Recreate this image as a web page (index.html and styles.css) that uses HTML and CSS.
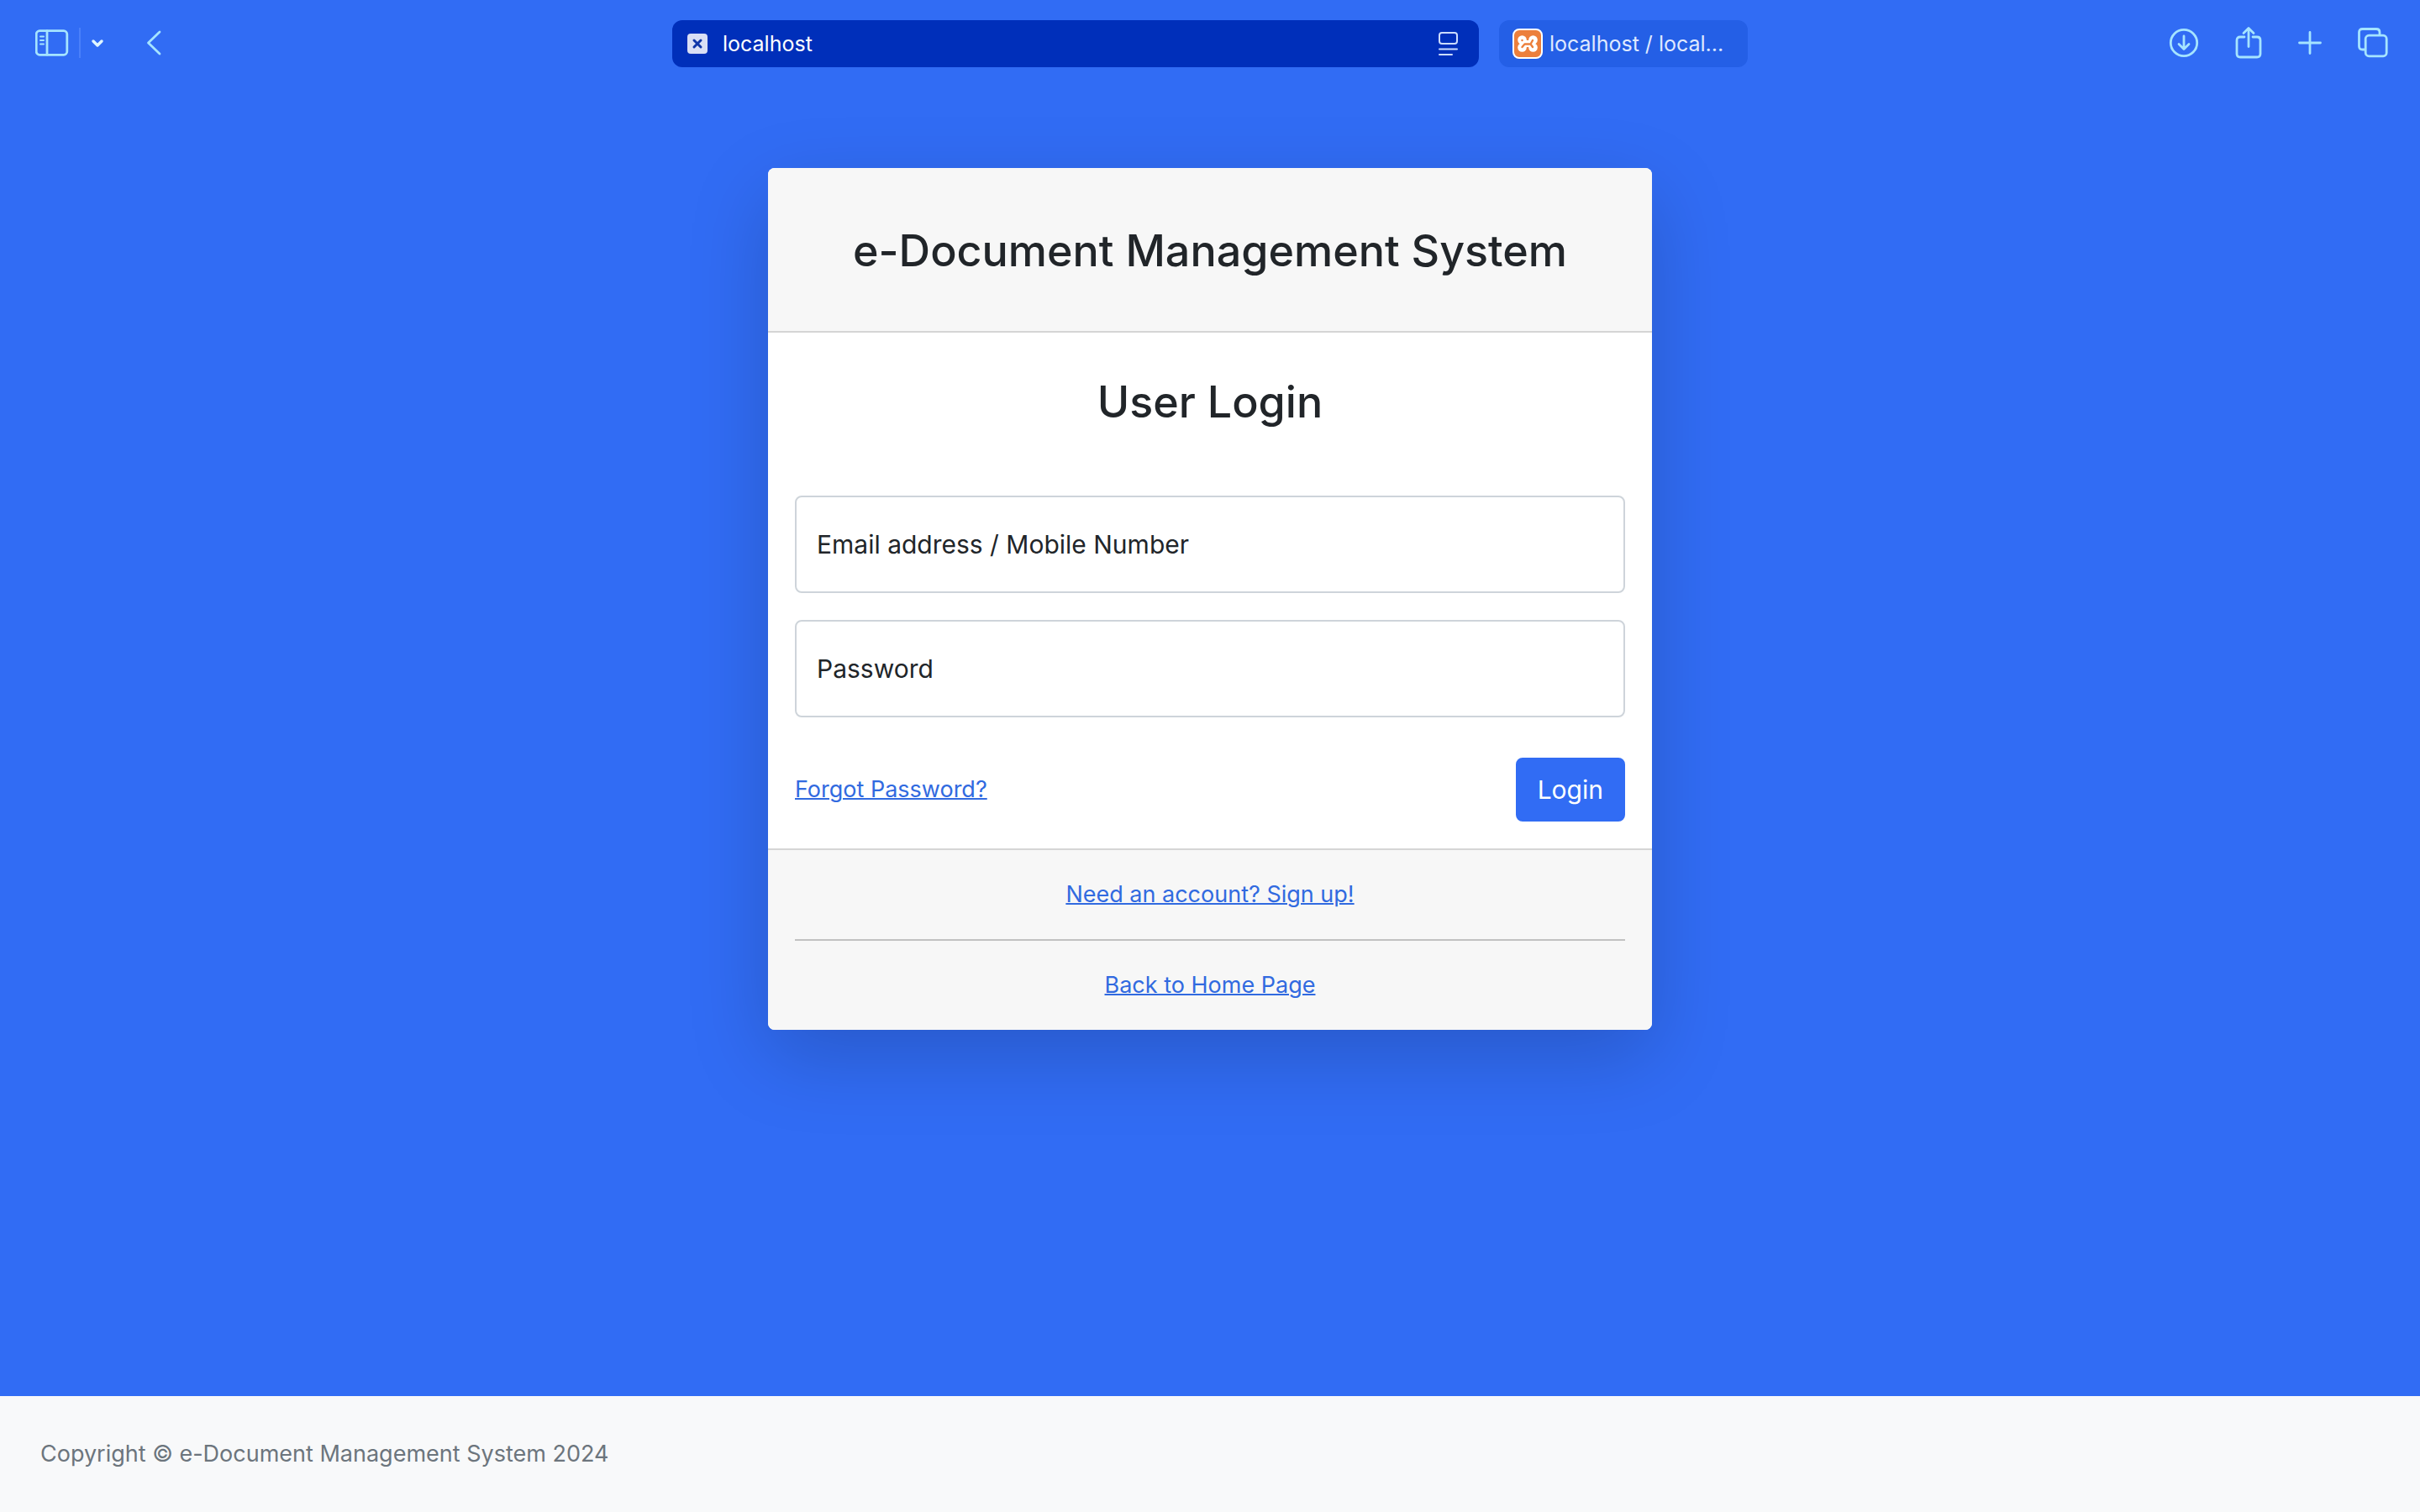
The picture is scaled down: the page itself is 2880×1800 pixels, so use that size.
FILE: index.html
```html
<!DOCTYPE html>
<html lang="en">
<head>
<meta charset="utf-8">
<meta name="viewport" content="width=device-width, initial-scale=1">
<title>e-Document Management System</title>
<link rel="stylesheet" href="styles.css">
</head>
<body>
<header class="toolbar">
  <div class="tools">
    <button class="tool tool-sidebar" type="button" aria-label="Sidebar">
      <svg width="40" height="32" viewBox="0 0 40 32"><rect x="1.2" y="1.7" width="36.600" height="28.600" rx="4"/><path d="M14 2v28"/><path class="fine" d="M6 8.5h4M6 13h4M6 17.500h4"/></svg>
    </button>
    <span class="divider"></span>
    <button class="tool tool-menu" type="button" aria-label="Tab groups">
      <svg class="bold" width="16" height="12" viewBox="0 0 16 12"><path d="M3 4l5 5 5-5"/></svg>
    </button>
    <button class="tool" type="button" aria-label="Back">
      <svg width="20" height="32" viewBox="0 0 20 32"><path d="M18 3L4.500 16 18 29"/></svg>
    </button>
  </div>
  <nav class="tabs" aria-label="Tabs">
    <div class="tab tab-active">
      <button class="tab-close" type="button" aria-label="Close tab">
        <svg width="24" height="24" viewBox="0 0 24 24"><rect width="24" height="24" rx="4"/><path d="M8 8l8 8M16 8l-8 8"/></svg>
      </button>
      <span class="tab-name">localhost</span>
      <button class="tool" type="button" aria-label="Page menu">
        <svg class="reader" width="24" height="30" viewBox="0 0 24 30"><rect x="1" y="2" width="21" height="13" rx="3"/><path d="M1 21.500h21M1 28h15"/></svg>
      </button>
    </div>
    <a class="tab tab-other" href="#">
      <svg class="favicon" width="36" height="36" viewBox="0 0 36 36"><rect class="tile" x="1" y="1" width="34" height="34" rx="7"/><g class="lobes"><circle cx="11.500" cy="13.500" r="5.300"/><circle cx="24.500" cy="13.500" r="5.300"/><circle cx="11.500" cy="22.500" r="5.300"/><circle cx="24.500" cy="22.500" r="5.300"/><path d="M11 14h14v8H11z"/></g><path class="bone" d="M11.500 22l3-3.500H21.500l2.500-4.500M21.500 18.500l2.500 3.500M11.500 14v.1"/></svg>
      <span class="tab-name">localhost / local...</span>
    </a>
  </nav>
  <div class="tools tools-end">
    <button class="tool" type="button" aria-label="Downloads">
      <svg width="36" height="36" viewBox="0 0 36 36"><circle cx="18" cy="18" r="15.700"/><path d="M18 10v15M12 19.500l6 6 6-6"/></svg>
    </button>
    <button class="tool" type="button" aria-label="Share">
      <svg width="32" height="40" viewBox="0 0 32 40"><path d="M11 13H6q-4 0-4 4v16q0 4 4 4h20q4 0 4-4V17q0-4-4-4h-5M16 24.500V3M10 8.500l6-6 6 6"/></svg>
    </button>
    <button class="tool" type="button" aria-label="New tab">
      <svg width="28" height="28" viewBox="0 0 28 28"><path d="M14 1.500v25M1.500 14h25"/></svg>
    </button>
    <button class="tool" type="button" aria-label="Tab overview">
      <svg width="36" height="36" viewBox="0 0 36 36"><rect x="9.200" y="9.200" width="25" height="24.600" rx="4"/><path d="M8 26H5.500q-4 0-4-4V5.500q0-4 4-4H22q4 0 4 4V8"/></svg>
    </button>
  </div>
</header>
<main class="page">
  <section class="card">
    <div class="card-header"><h1 class="title">e-Document Management System</h1></div>
    <form class="card-body">
      <h2 class="title">User Login</h2>
      <div class="field">
        <input id="email" type="text" name="email">
        <label for="email">Email address / Mobile Number</label>
      </div>
      <div class="field">
        <input id="password" type="password" name="password">
        <label for="password">Password</label>
      </div>
      <div class="actions">
        <a class="link" href="#">Forgot Password?</a>
        <button class="submit" type="submit">Login</button>
      </div>
    </form>
    <div class="card-footer">
      <a class="link" href="#">Need an account? Sign up!</a>
      <hr>
      <a class="link" href="#">Back to Home Page</a>
    </div>
  </section>
</main>
<footer class="copyright">Copyright © e-Document Management System 2024</footer>
</body>
</html>
```
FILE: styles.css
```css
* { box-sizing: border-box; }

body {
  margin: 0;
  min-height: 100vh;
  display: flex;
  flex-direction: column;
  background: #316cf4;
  color: #212529;
  font-family: Inter, "Liberation Sans", sans-serif;
  font-size: 27px;
  line-height: 42px;
}

button, input { font: inherit; }
a { color: inherit; }

/* Browser toolbar */
.toolbar {
  display: grid;
  grid-template-columns: 1fr minmax(0, 1280px) 1fr;
  align-items: center;
  height: 104px;
}

.tools {
  display: flex;
  align-items: center;
  padding: 0 42px 2px;
}

.tools-end {
  justify-content: flex-end;
  gap: 43px;
  padding: 0 38px 2px;
}

.tool, .tab-close {
  display: flex;
  padding: 0;
  border: 0;
  background: none;
}

.tool svg {
  fill: none;
  stroke: #a5e4ff;
  stroke-width: 2.8;
  stroke-linecap: round;
  stroke-linejoin: round;
}

.tool .fine { stroke-width: 2; }

.tool .bold {
  stroke: #e0f6ff;
  stroke-width: 3.5;
}

.tool .reader {
  stroke: #ccdcff;
  stroke-width: 2;
}

.divider {
  width: 2px;
  height: 36px;
  margin: 0 12px;
  background: #4a80fa;
}

.tool-menu { margin-right: 48px; }

.tabs {
  display: flex;
  gap: 24px;
}

.tab {
  display: flex;
  align-items: center;
  height: 56px;
  border-radius: 12px;
  font-size: 25px;
  color: #fff;
  text-decoration: none;
  white-space: nowrap;
}

.tab-active {
  flex: 1;
  gap: 18px;
  padding: 0 24px 0 18px;
  background: #002fba;
}

.tab-active .tab-name { flex: 1; }

.tab-other {
  width: 296px;
  gap: 8px;
  padding: 0 16px;
  background: #245fe6;
  color: #dfe9ff;
}

.tab-close rect { fill: #d9dff5; }

.tab-close path {
  stroke: #0e35a8;
  stroke-width: 3;
  stroke-linecap: round;
}

.favicon { flex: none; }

.favicon .tile {
  fill: #ec7f3c;
  stroke: #fff;
  stroke-width: 2;
}

.favicon .lobes { fill: #fff; }

.favicon .bone {
  fill: none;
  stroke: #ec7f3c;
  stroke-width: 2.4;
  stroke-linecap: round;
  stroke-linejoin: round;
}

/* Login card */
.page {
  flex: 1;
  padding: 96px 24px;
}

.card {
  max-width: 1052px;
  margin: 0 auto;
  border-radius: 8px;
  overflow: hidden;
  background: #fff;
  box-shadow: 0 32px 96px rgba(0, 0, 0, 0.175);
}

.title {
  margin: 0;
  font-size: 52px;
  font-weight: 500;
  line-height: 66px;
  text-align: center;
}

.card-header {
  padding: 66px 32px 62px;
  border-bottom: 2px solid #d5d5d5;
  background: #f7f7f7;
}

.card-body {
  display: flex;
  flex-direction: column;
  gap: 32px;
  padding: 32px;
}

.card-body .title { margin: 18px 0 46px; }

.field {
  position: relative;
  font-size: 30px;
}

.field input {
  display: block;
  width: 100%;
  height: 116px;
  padding: 32px 24px;
  border: 2px solid #ced4da;
  border-radius: 8px;
  background: #fff;
  color: inherit;
}

.field label {
  position: absolute;
  inset: 0 auto 0 26px;
  display: flex;
  align-items: center;
}

.actions {
  display: flex;
  align-items: center;
  justify-content: space-between;
  margin-top: 16px;
}

.link {
  color: #316ae0;
  text-decoration-thickness: 2px;
}

.submit {
  padding: 12px 24px;
  border: 2px solid #316cf4;
  border-radius: 8px;
  background: #316cf4;
  color: #fff;
  font-size: 30px;
  line-height: 48px;
}

.card-footer {
  padding: 32px;
  border-top: 2px solid #d5d5d5;
  background: #f7f7f7;
  text-align: center;
}

.card-footer .link { display: block; }

.card-footer hr {
  height: 2px;
  margin: 32px 0;
  border: 0;
  background: #c1c1c1;
}

.copyright {
  padding: 48px;
  background: #f8f9fa;
  color: #6c757d;
}
```
